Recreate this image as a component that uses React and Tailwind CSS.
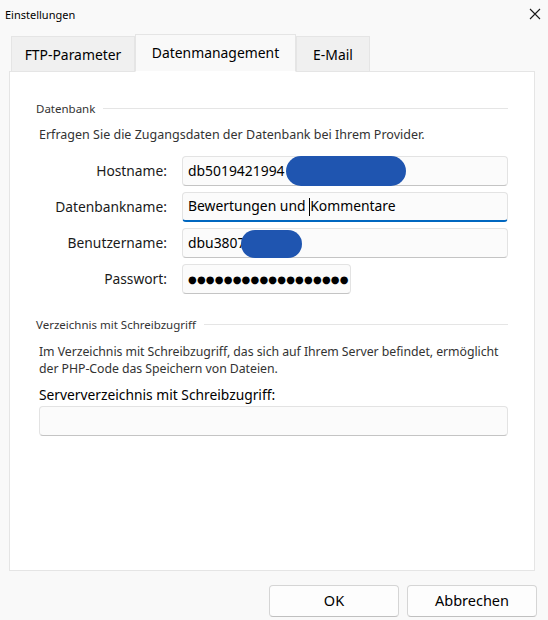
import { useState } from "react";

const font = { fontFamily: '"Noto Sans", "Open Sans", sans-serif' };

function Field({ label, children, focused, inputClass = "w-[326px]", blob }) {
  return (
    <div className="flex items-center">
      <div className="w-[131px] text-right text-[13.8px] text-[#1a1a1a]">{label}</div>
      <div
        className={`relative ml-[15px] h-[30px] ${inputClass} rounded-[4px] border border-[#e3e3e3] bg-[#fbfbfb] flex items-center pl-[5px] ${
          focused ? "border-b-2 border-b-[#0067c0]" : "border-b-[#c4c4c4]"
        }`}
      >
        {children}
        {blob}
      </div>
    </div>
  );
}

function GroupTitle({ children }) {
  return (
    <div className="flex items-center gap-[8px]">
      <span className="text-[11.5px] text-[#333]">{children}</span>
      <div className="flex-1 h-px bg-[#e5e5e5]" />
    </div>
  );
}

export default function App() {
  const [tab, setTab] = useState("Datenmanagement");
  const tabs = [
    { name: "FTP-Parameter", w: "w-[124px]" },
    { name: "Datenmanagement", w: "w-[161px]" },
    { name: "E-Mail", w: "w-[74px]" },
  ];

  return (
    <div className="w-[548px] h-[620px] bg-[#f9f9f9] flex flex-col text-[#1a1a1a]" style={font}>
      {/* title bar */}
      <div className="h-[34px] flex items-start justify-between">
        <span className="text-[11px] text-black pl-[5px] pt-[7px]">Einstellungen</span>
        <svg width="12" height="12" viewBox="0 0 12 12" className="mt-[8px] mr-[7px]">
          <path d="M1 1 L11 11 M11 1 L1 11" stroke="#1a1a1a" strokeWidth="1.1" />
        </svg>
      </div>

      {/* tabs */}
      <div className="flex items-end pl-[11px] h-[38px] relative z-10 -mb-px">
        {tabs.map((t) => {
          const active = t.name === tab;
          return (
            <button
              key={t.name}
              onClick={() => setTab(t.name)}
              className={
                active
                  ? `${t.w} h-[38px] bg-[#f9f9f9] border border-[#e5e5e5] border-b-white text-[13.9px] text-black`
                  : `${t.w} h-[36px] pt-[3px] bg-[#f0f0f0] border border-[#e5e5e5] text-[13.9px] text-black`
              }
            >
              {t.name}
            </button>
          );
        })}
      </div>

      {/* panel */}
      <div className="ml-[9px] w-[526px] h-[500px] bg-white border border-[#e5e5e5] px-[26px] pt-[28px]">
        <GroupTitle>Datenbank</GroupTitle>
        <p className="text-[12.5px] text-[#333] pl-[3px] mt-[9px]">
          Erfragen Sie die Zugangsdaten der Datenbank bei Ihrem Provider.
        </p>
        <div className="flex flex-col gap-[6px] mt-[11px]">
          <Field
            label="Hostname:"
            blob={<span className="absolute left-[103px] top-[-1px] w-[120px] h-[30px] rounded-full bg-[#1f55b0] blur-[0.6px]" />}
          >
            <span className="text-[13.9px] text-black">db5019421994</span>
          </Field>
          <Field label="Datenbankname:" focused>
            <span className="text-[13.9px] text-black whitespace-pre">Bewertungen und </span>
            <span className="w-px h-[18px] bg-black" />
            <span className="text-[13.9px] text-black">Kommentare</span>
          </Field>
          <Field
            label="Benutzername:"
            blob={<span className="absolute left-[58px] top-[1px] w-[61px] h-[28px] rounded-full bg-[#1f55b0] blur-[0.6px]" />}
          >
            <span className="text-[13.9px] text-black">dbu3807</span>
          </Field>
          <Field label="Passwort:" inputClass="w-[169px]">
            <span className="text-[10px] tracking-[0.2px] text-black whitespace-nowrap" style={{ fontFamily: '"DejaVu Sans", sans-serif' }}>
              {"●".repeat(18)}
            </span>
          </Field>
        </div>

        <div className="mt-[22px]">
          <GroupTitle>Verzeichnis mit Schreibzugriff</GroupTitle>
        </div>
        <p className="text-[12.3px] tracking-[-0.05px] leading-[17px] text-[#333] pl-[3px] -mr-[4px] mt-[10px]">
          Im Verzeichnis mit Schreibzugriff, das sich auf Ihrem Server befindet, ermöglicht der PHP-Code das Speichern von Dateien.
        </p>
        <div className="text-[13.8px] leading-[20px] text-black pl-[3px] mt-[8px]">Serververzeichnis mit Schreibzugriff:</div>
        <div className="ml-[3px] mt-px h-[30px] rounded-[4px] border border-[#e3e3e3] border-b-[#c4c4c4] bg-[#fbfbfb]" />
      </div>

      {/* buttons */}
      <div className="flex justify-end gap-[8px] pr-[11px] mt-[14px]">
        <button className="w-[130px] h-[32px] rounded-[4px] border border-[#d5d5d5] border-b-[#c0c0c0] bg-[#fdfdfd] text-[14.5px] text-black">
          OK
        </button>
        <button className="w-[130px] h-[32px] rounded-[4px] border border-[#d5d5d5] border-b-[#c0c0c0] bg-[#fdfdfd] text-[14.5px] text-black">
          Abbrechen
        </button>
      </div>
    </div>
  );
}
